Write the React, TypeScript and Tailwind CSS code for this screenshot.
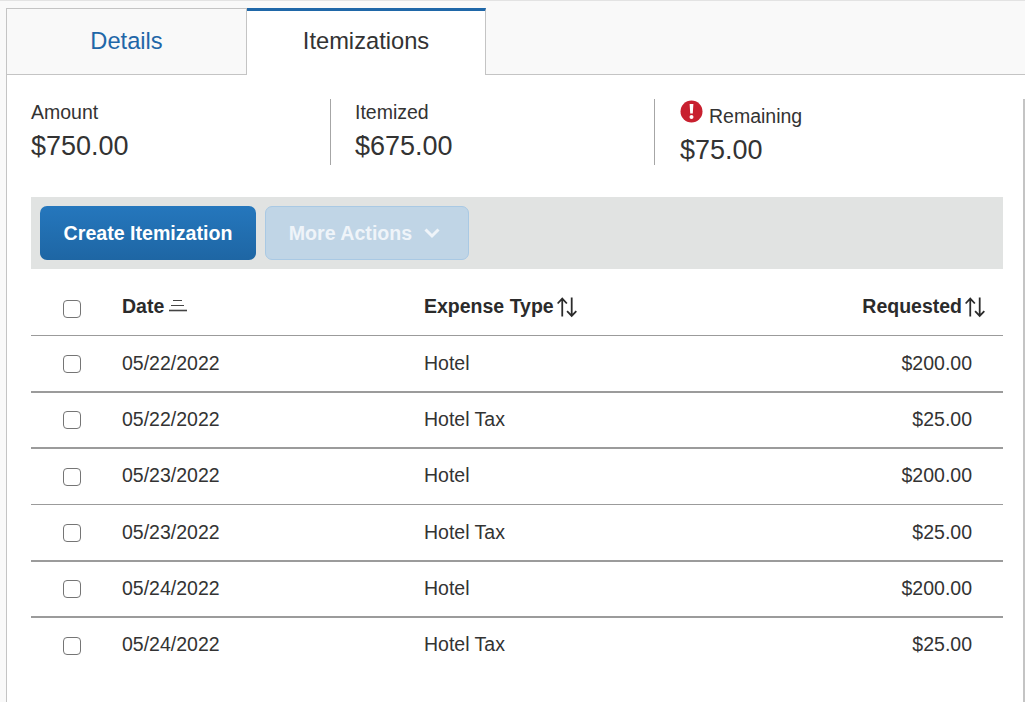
import React from 'react';

const rows = [
  { date: '05/22/2022', type: 'Hotel', amount: '$200.00', line: 'border-b-2 h-[57px]', text: 'mt-0' },
  { date: '05/22/2022', type: 'Hotel Tax', amount: '$25.00', line: 'border-b-2 h-[56px]', text: '-mt-[1px]' },
  { date: '05/23/2022', type: 'Hotel', amount: '$200.00', line: 'border-b h-[56px]', text: '-mt-[1px]' },
  { date: '05/23/2022', type: 'Hotel Tax', amount: '$25.00', line: 'border-b-2 h-[57px]', text: 'mt-0' },
  { date: '05/24/2022', type: 'Hotel', amount: '$200.00', line: 'border-b-2 h-[56px]', text: '-mt-[1px]' },
  { date: '05/24/2022', type: 'Hotel Tax', amount: '$25.00', line: 'h-[56px]', text: '-mt-[3px]' },
];

const Check = () => (
  <span className="block w-[18px] h-[18px] rounded-[4px] border-[1.5px] border-[#757575] bg-white" />
);

const SortBoth = () => (
  <svg width="21" height="21" viewBox="0 0 20 20" fill="none" stroke="#2b2b2b" strokeWidth="1.7" className="ml-[3px] mt-[2px]">
    <path d="M5 18.5V1.5M.6 6.2L5 1.5l4.4 4.7" />
    <path d="M14 .5V18M9.6 13.5L14 18l4.4-4.5" />
  </svg>
);

const SortAsc = () => (
  <svg width="18" height="14" viewBox="0 0 18 14" fill="none" stroke="#444" strokeWidth="1" className="ml-[5px]">
    <path d="M4 1.5h9M2 6.5h13" />
    <path d="M0 11.5h18" strokeWidth="1.6" />
  </svg>
);

export default function App() {
  return (
    <div className="w-[1025px] h-[702px] overflow-hidden bg-[#f9f9f9] border-t border-[#e3e3e3] text-[#333] font-['Liberation_Sans',Arial,sans-serif]">
      <div className="pl-[6px] pt-[7px]">
        {/* Tabs */}
        <div className="flex h-[67px] text-[23.7px]">
          <div className="w-[241px] flex items-center justify-center border border-[#c4c4c4] text-[#1f67a8]">Details</div>
          <div className="w-[239px] flex items-center justify-center bg-white border-r border-[#c4c4c4] border-t-[3px] border-t-[#1f67a8] pb-[3px]">Itemizations</div>
          <div className="flex-1 border-b border-[#c4c4c4]" />
        </div>

        {/* Panel */}
        <div className="h-[630px] bg-white border-l border-[#c4c4c4] pl-[24px] pr-[22px] pt-[24px] relative">
          <div className="flex h-[66px]">
            <div className="w-[299px]">
              <div className="text-[19.5px] leading-[26px]">Amount</div>
              <div className="text-[27px] leading-[33px] mt-[5px]">$750.00</div>
            </div>
            <div className="w-[324px] border-l border-[#a6a6a6] pl-[24px]">
              <div className="text-[19.5px] leading-[26px]">Itemized</div>
              <div className="text-[27px] leading-[33px] mt-[5px]">$675.00</div>
            </div>
            <div className="flex-1 border-l border-[#a6a6a6] pl-[25px]">
              <div className="flex items-center h-[26px] text-[19.5px] leading-[26px]">
                <svg width="23" height="23" viewBox="0 0 23 23" className="mr-[6px] -mt-[2px]">
                  <circle cx="11.5" cy="11.5" r="11" fill="#c8202f" />
                  <path d="M9.6 4h3.8l-.6 9.5h-2.6z" fill="#fff" />
                  <circle cx="11.5" cy="17" r="2" fill="#fff" />
                </svg>
                <span className="mt-[8px]">Remaining</span>
              </div>
              <div className="text-[27px] leading-[33px] mt-[9px]">$75.00</div>
            </div>
          </div>

          {/* Toolbar */}
          <div className="flex items-center gap-[9px] h-[72px] mt-[32px] px-[9px] bg-[#e1e3e2]">
            <button className="w-[216px] h-[54px] pt-[2px] rounded-[7px] bg-gradient-to-b from-[#2577bd] to-[#1e66a4] text-white font-bold text-[19.6px]">Create Itemization</button>
            <button className="w-[204px] h-[54px] pt-[2px] pr-[4px] rounded-[7px] bg-[#c0d5e6] border border-[#a9c9e4] text-[#eff4f9] font-bold text-[19.6px] flex items-center justify-center gap-[11px]">
              More Actions
              <svg width="18" height="12" viewBox="0 0 18 12" fill="none" stroke="#eff4f9" strokeWidth="3" className="-mt-[2px]"><path d="M2.5 2.5L9 9l6.5-6.5" /></svg>
            </button>
          </div>

          {/* Table */}
          <div className="flex items-center h-[67px] border-b border-[#9b9b9b] text-[19.5px] leading-[30px] font-bold text-[#2b2b2b]">
            <div className="w-[91px] pl-[32px] pt-[14px]"><Check /></div>
            <div className="w-[302px] flex items-center pt-[8px]">Date<SortAsc /></div>
            <div className="flex-1 flex items-center pt-[8px]">Expense Type<SortBoth /></div>
            <div className="flex items-center pr-[17px] pt-[8px]">Requested<SortBoth /></div>
          </div>
          {rows.map((row, i) => (
            <div key={i} className={`flex items-center text-[19.5px] border-[#9b9b9b] ${row.line}`}>
              <div className="w-[91px] pl-[32px]"><Check /></div>
              <div className={`w-[302px] ${row.text}`}>{row.date}</div>
              <div className={`flex-1 ${row.text}`}>{row.type}</div>
              <div className={`pr-[31px] ${row.text}`}>{row.amount}</div>
            </div>
          ))}

          <div className="absolute right-0 top-[24px] bottom-0 w-[2px] bg-[#c4c4c4]" />
        </div>
      </div>
    </div>
  );
}
